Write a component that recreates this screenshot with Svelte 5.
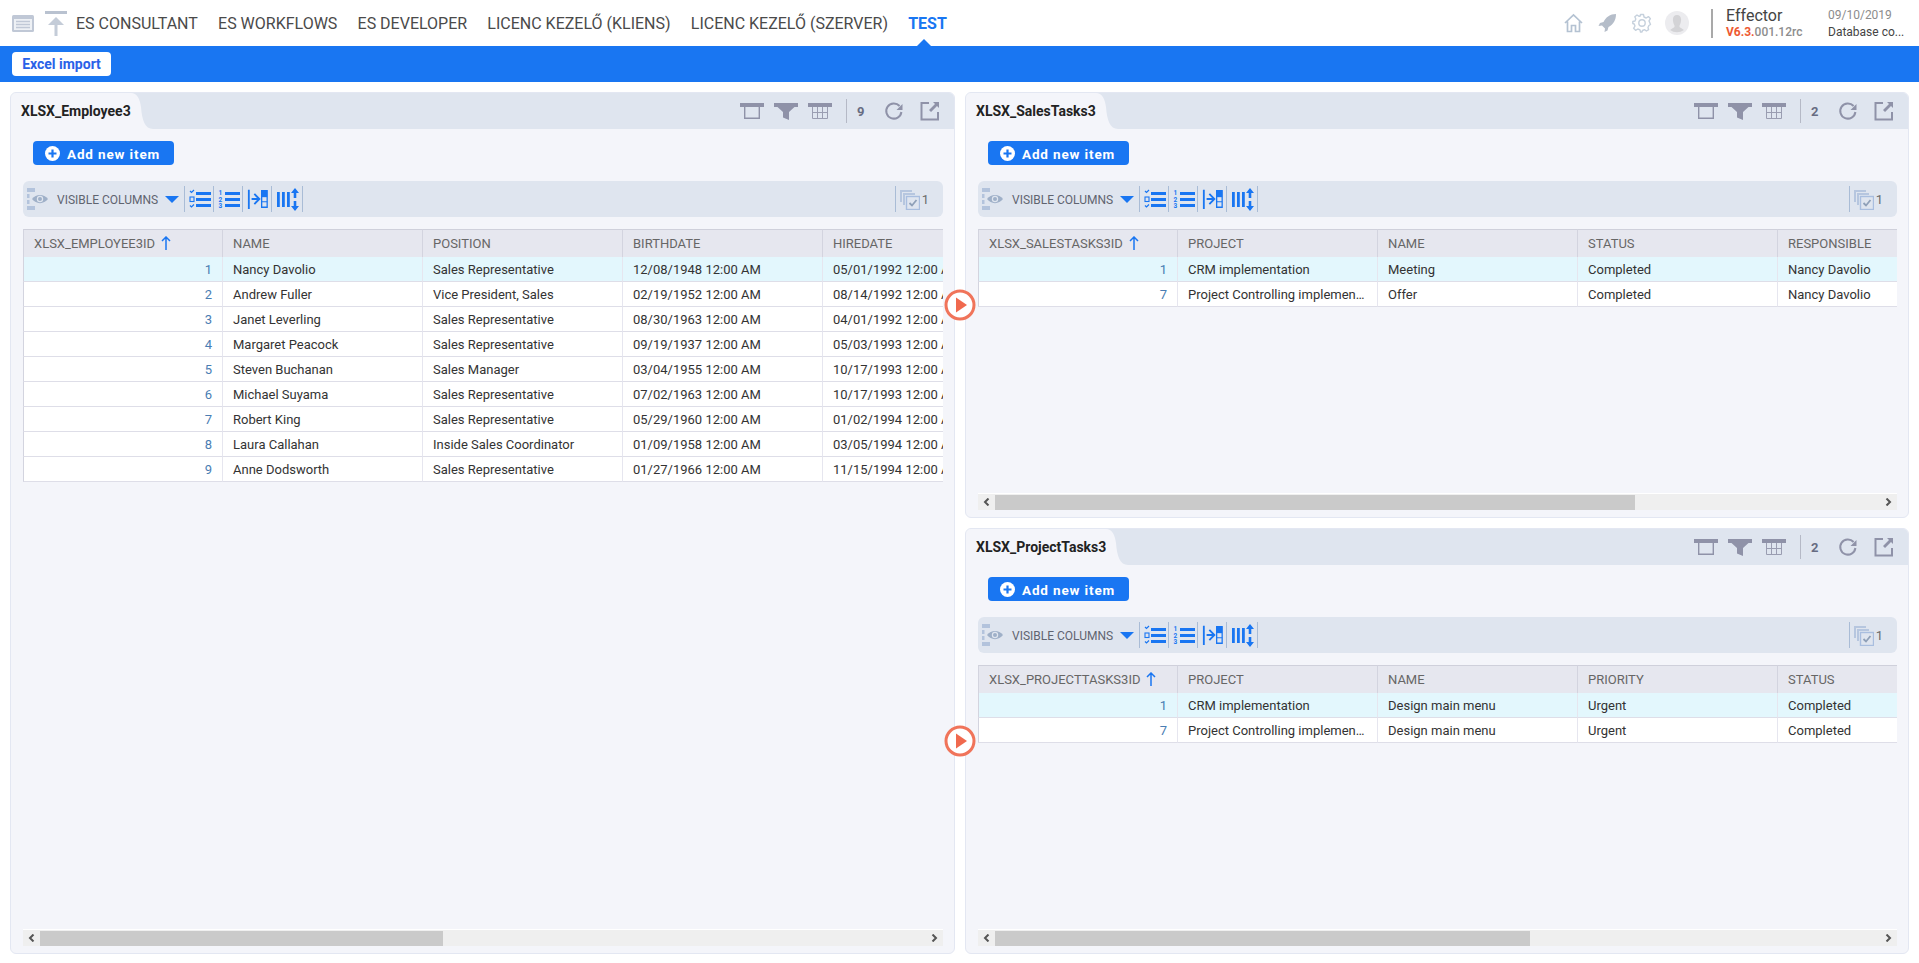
<script>
  const nav = ['ES CONSULTANT', 'ES WORKFLOWS', 'ES DEVELOPER', 'LICENC KEZELŐ (KLIENS)', 'LICENC KEZELŐ (SZERVER)'];

  const employees = {
    title: 'XLSX_Employee3',
    count: 9,
    thumb: 403,
    columns: ['XLSX_EMPLOYEE3ID', 'NAME', 'POSITION', 'BIRTHDATE', 'HIREDATE'],
    rows: [
      ['1', 'Nancy Davolio', 'Sales Representative', '12/08/1948 12:00 AM', '05/01/1992 12:00 AM'],
      ['2', 'Andrew Fuller', 'Vice President, Sales', '02/19/1952 12:00 AM', '08/14/1992 12:00 AM'],
      ['3', 'Janet Leverling', 'Sales Representative', '08/30/1963 12:00 AM', '04/01/1992 12:00 AM'],
      ['4', 'Margaret Peacock', 'Sales Representative', '09/19/1937 12:00 AM', '05/03/1993 12:00 AM'],
      ['5', 'Steven Buchanan', 'Sales Manager', '03/04/1955 12:00 AM', '10/17/1993 12:00 AM'],
      ['6', 'Michael Suyama', 'Sales Representative', '07/02/1963 12:00 AM', '10/17/1993 12:00 AM'],
      ['7', 'Robert King', 'Sales Representative', '05/29/1960 12:00 AM', '01/02/1994 12:00 AM'],
      ['8', 'Laura Callahan', 'Inside Sales Coordinator', '01/09/1958 12:00 AM', '03/05/1994 12:00 AM'],
      ['9', 'Anne Dodsworth', 'Sales Representative', '01/27/1966 12:00 AM', '11/15/1994 12:00 AM']
    ]
  };
  const sales = {
    title: 'XLSX_SalesTasks3',
    count: 2,
    thumb: 640,
    columns: ['XLSX_SALESTASKS3ID', 'PROJECT', 'NAME', 'STATUS', 'RESPONSIBLE'],
    rows: [
      ['1', 'CRM implementation', 'Meeting', 'Completed', 'Nancy Davolio'],
      ['7', 'Project Controlling implementation', 'Offer', 'Completed', 'Nancy Davolio']
    ]
  };
  const project = {
    title: 'XLSX_ProjectTasks3',
    count: 2,
    thumb: 535,
    columns: ['XLSX_PROJECTTASKS3ID', 'PROJECT', 'NAME', 'PRIORITY', 'STATUS'],
    rows: [
      ['1', 'CRM implementation', 'Design main menu', 'Urgent', 'Completed'],
      ['7', 'Project Controlling implementation', 'Design main menu', 'Urgent', 'Completed']
    ]
  };
</script>

{#snippet panel(d, cls)}
  <section class="panel {cls}">
    <header class="phead">
      <div class="tab">{d.title}</div>
      <svg class="curve" width="22" height="36" viewBox="0 0 22 36"><path d="M0 0C6 0 9 6 10 14C11 27 14 36 22 36H0Z" /></svg>
      <div class="ptools">
        <svg width="24" height="16" viewBox="0 0 24 16"><path d="M0 0H24V4H0Z" class="g" /><path d="M4.700 4V15.300H19.300V4" fill="none" stroke="#8f92a8" stroke-width="1.400" /></svg>
        <svg width="24" height="17" viewBox="0 0 24 17"><path d="M0 0H24V4H20.500L15 9V17L9 14.500V9L3.500 4H0Z" class="g" /></svg>
        <svg width="24" height="16" viewBox="0 0 24 16"><path d="M0 0H24V4H0Z" class="g" /><path d="M4.500 4V15.500H19.500V4M4.500 9.500H19.500M9.500 4V15.500M14.500 4V15.500" fill="none" stroke="#9a9db1" stroke-width="1" /></svg>
        <span class="psep"></span>
        <span class="pcount">{d.count}</span>
        <svg class="refresh" width="20" height="20" viewBox="0 0 20 20"><path d="M15.600 5A7.600 7.600 0 1 0 17.400 11" fill="none" stroke="#8f92a8" stroke-width="2" /><path d="M18.500 3V9H12.500Z" class="g" /></svg>
        <svg class="ext" width="20" height="20" viewBox="0 0 20 20"><path d="M9 2H1.500V18.500H18V11" fill="none" stroke="#8f92a8" stroke-width="2" /><path d="M13 1H19V7L17 5L11 11L9 9L15 3Z" class="g" /></svg>
      </div>
    </header>

    <div class="pbody">
      <button class="add">
        <svg width="15" height="15" viewBox="0 0 15 15"><circle cx="7.500" cy="7.500" r="7.500" fill="#fff" /><path d="M7.500 3.500V11.500M3.500 7.500H11.500" stroke="#1976f2" stroke-width="2.200" /></svg>
        <span>Add new item</span>
      </button>

      <div class="tbar">
        <svg class="eye" width="21" height="22" viewBox="0 0 21 22">
          <path d="M0 0H8V4H0ZM0 6H2.500V10H0ZM0 12H2.500V16H0ZM0 18H8V22H0Z" fill="#b3c3dc" />
          <path d="M5 11C9 5.500 17 5.500 21 11C17 16.500 9 16.500 5 11Z" fill="#9fb0c8" />
          <circle cx="13" cy="11" r="3.200" fill="#dfe5ef" /><circle cx="13" cy="11" r="2" fill="#9fb0c8" />
        </svg>
        <span class="vis">VISIBLE COLUMNS</span>
        <span class="caret"></span>
        <span class="tsep"></span>
        <svg class="tic" width="22" height="20" viewBox="0 0 22 20">
          <path d="M7 3H22V6H7ZM7 9H22V12H7ZM7 15H22V18H7Z" fill="#1976f2" />
          <path d="M1 2L2.500 3.500L5 1M1 16.500L2.500 18L5 15.500" fill="none" stroke="#1976f2" stroke-width="1.200" />
          <rect x="1" y="8" width="4" height="4.500" fill="none" stroke="#1976f2" stroke-width="1.100" />
        </svg>
        <span class="tsep"></span>
        <svg class="tic" width="22" height="20" viewBox="0 0 22 20">
          <path d="M7 3H22V6H7ZM7 9H22V12H7ZM7 15H22V18H7Z" fill="#1976f2" />
          <text x="0.500" y="6" class="num">1</text><text x="0.500" y="12.500" class="num">2</text><text x="0.500" y="19" class="num">3</text>
        </svg>
        <span class="tsep"></span>
        <svg class="tic" width="22" height="22" viewBox="0 0 22 24">
          <path d="M0 2H2V23H0Z" fill="#1976f2" />
          <path d="M4 12H11.500M7 6.500L12.500 12L7 17.500" fill="none" stroke="#1976f2" stroke-width="2" />
          <path d="M15 3H21V21H15Z" fill="none" stroke="#1976f2" stroke-width="1.400" /><rect x="15" y="3" width="6" height="7" fill="#1976f2" />
          <path d="M15 15H21" stroke="#1976f2" stroke-width="1.200" />
        </svg>
        <span class="tsep"></span>
        <svg class="tic" width="24" height="24" viewBox="0 0 24 24">
          <path d="M1 5H3.800V20H1ZM6 5H8.800V20H6ZM11 5H13.800V20H11Z" fill="#1976f2" />
          <path d="M19 1L23 6H20.300V11H17.700V6H15ZM17.700 14H20.300V19H23L19 24L15 19H17.700Z" fill="#1976f2" />
        </svg>
        <span class="tsep"></span>
        <span class="spacer"></span>
        <span class="tsep wide"></span>
        <svg class="stack" width="21" height="21" viewBox="0 0 21 21">
          <path d="M1 1H13V3H3V13H1Z" fill="#b6c6df" /><path d="M4 4H16V6H6V16H4Z" fill="#b6c6df" />
          <rect x="7.500" y="7.500" width="13" height="13" fill="#dfe5ef" stroke="#a9bedf" stroke-width="1.400" />
          <path d="M10.500 14L13 16.500L17.500 11" fill="none" stroke="#8fa0b8" stroke-width="1.800" />
        </svg>
        <span class="tcount">1</span>
      </div>

      <div class="grid">
        <table>
          <thead>
            <tr>
              {#each d.columns as c, i}
                <th>{c}{#if i === 0}<svg class="sort" width="10" height="14" viewBox="0 0 10 14"><path d="M5 1V14M1 5L5 1L9 5" fill="none" stroke="#1976f2" stroke-width="1.500" /></svg>{/if}</th>
              {/each}
            </tr>
          </thead>
          <tbody>
            {#each d.rows as r, ri}
              <tr class:sel={ri === 0}>
                {#each r as v, i}
                  <td class:id={i === 0}>{v}</td>
                {/each}
              </tr>
            {/each}
          </tbody>
        </table>
      </div>

      <div class="hscroll">
        <span class="arr"><svg width="7" height="8" viewBox="0 0 7 8"><path d="M5.500 0.500L2 4L5.500 7.500" fill="none" stroke="#555" stroke-width="2" /></svg></span>
        <div class="track"><div class="thumb" style="width:{d.thumb}px"></div></div>
        <span class="arr"><svg width="7" height="8" viewBox="0 0 7 8"><path d="M1.500 0.500L5 4L1.500 7.500" fill="none" stroke="#555" stroke-width="2" /></svg></span>
      </div>
    </div>
  </section>
{/snippet}

{#snippet play(cls)}
  <svg class="play {cls}" width="32" height="32" viewBox="0 0 32 32">
    <circle cx="16" cy="16" r="14" fill="#fff" stroke="#f0745a" stroke-width="3" />
    <path d="M12 8.500L23 16L12 23.500Z" fill="#f0694e" />
  </svg>
{/snippet}

<div class="page">
  <nav class="top">
    <svg class="ic-list" width="22" height="17" viewBox="0 0 22 17">
      <rect width="22" height="17" rx="1.500" fill="#c0c8d6" />
      <rect x="2" y="4" width="18" height="11" fill="#eef1f5" />
      <path d="M4 6.500H18M4 9.500H18M4 12.500H18" stroke="#c0c8d6" stroke-width="1.500" />
    </svg>
    <svg class="ic-up" width="22" height="25" viewBox="0 0 22 25">
      <path d="M0 0H22V3H0Z" fill="#b9c2d0" /><path d="M9.500 25V14H3L11 6L19 14H12.500V25Z" fill="#c4ccd8" />
    </svg>
    <ul class="menu">
      {#each nav as n}<li>{n}</li>{/each}
      <li class="active">TEST</li>
    </ul>
    <div class="right">
      <svg class="r1" width="19" height="20" viewBox="0 0 19 20"><path d="M1 10L9.500 2L18 10M3.500 8.500V18.500H7.500V12.500H11.500V18.500H15.500V8.500" fill="none" stroke="#b4c2d2" stroke-width="1.700" /></svg>
      <svg class="r2" width="19" height="20" viewBox="0 0 19 20"><path d="M18 1C12 1 8 4 5.500 9L2 10L0.500 13L4 12.500L7 15.500L6.500 19L9.500 17.500L10.500 14C15.500 11.500 18 7 18 1Z" fill="#b5bdc9" /></svg>
      <svg class="r3" width="20" height="20" viewBox="0 0 20 20"><path d="M8.500 1.500H11.500L12 4L14.200 5L16.400 3.600L18.400 5.700L17 7.900L17.900 10L18.500 11.500L16.900 12.500L16 14.500L16.600 16.600L14.400 18L12.500 16.600L10.500 17.500L10 19H8.500L8 16.800L5.800 16L3.600 17.300L1.600 15.300L3 13L2.200 11L0.800 10.500V8.500L3 8L3.800 6L2.800 3.800L5 2L7.200 3.400L8.200 3Z" fill="none" stroke="#c6d1dd" stroke-width="1.400" stroke-linejoin="round" /><circle cx="10" cy="10" r="3.200" fill="none" stroke="#c6d1dd" stroke-width="1.400" /></svg>
      <svg class="r4" width="24" height="24" viewBox="0 0 24 24"><circle cx="12" cy="12" r="12" fill="#ececef" /><path d="M12 4C15 4 16.500 6.500 16 10C15.700 12 15 13.500 14.500 14.500V16L19 19A12 12 0 0 1 5 19L9.500 16V14.500C9 13.500 8.300 12 8 10C7.500 6.500 9 4 12 4Z" fill="#d3d3d6" /></svg>
      <span class="vsep"></span>
      <div class="brand">
        <div class="bname">Effector</div>
        <div class="bver"><b>V6.3.</b>001.12rc</div>
      </div>
      <div class="meta">
        <div class="date">09/10/2019</div>
        <div class="db">Database co...</div>
      </div>
    </div>
  </nav>

  <div class="blue">
    <span class="notch"></span>
    <button class="excel">Excel import</button>
  </div>

  <main class="work">
    {@render panel(employees, 'left')}
    {@render panel(sales, '')}
    {@render panel(project, '')}
    {@render play('p1')}
    {@render play('p2')}
  </main>
</div>

<style>
  :global(body) { margin: 0; background: #fff; font-family: Roboto, "Liberation Sans", sans-serif; overflow: hidden; }
  .page { height: 963px; display: flex; flex-direction: column; color: #333; }

  .top { height: 46px; display: flex; align-items: center; flex: none; }
  .ic-list { margin-left: 12px; }
  .ic-up { margin-left: 11px; margin-top: 1px; }
  .menu { list-style: none; display: flex; gap: 20.200px; margin: 0 0 0 9px; padding: 0; font-size: 16px; color: #4a4a4a; }
  .menu li { white-space: nowrap; }
  .menu .active { color: #1976f2; font-weight: 700; }
  .right { margin-left: auto; display: flex; align-items: center; }
  .r1 { margin-right: 15px; }
  .r2 { margin-right: 15px; }
  .r3 { margin-right: 13px; }
  .r4 { margin-right: 22px; }
  .vsep { width: 2px; height: 29px; background: #a9a9a9; margin-right: 13px; }
  .brand { width: 102px; }
  .bname { font-size: 16px; line-height: 19px; color: #444; }
  .bver { font-size: 12px; line-height: 15px; color: #8d8d8d; font-weight: 500; }
  .bver b { color: #ee5a32; font-weight: 700; }
  .meta { width: 91px; }
  .date { font-size: 12px; line-height: 18px; color: #8c8c8c; }
  .db { font-size: 12px; line-height: 16px; color: #444; }

  .blue { height: 36px; flex: none; background: #1976f2; display: flex; align-items: center; position: relative; }
  .notch { position: absolute; left: 917px; top: -7px; width: 0; height: 0; border: 7px solid transparent; border-top: 0; border-bottom-color: #1976f2; }
  .excel { margin-left: 12px; height: 24px; width: 99px; padding: 0; border: 0; border-radius: 4px; background: #fff; color: #2a62e8; font: 700 14px Roboto, sans-serif; }

  .work { flex: 1; min-height: 0; position: relative; display: grid; grid-template-columns: 945px 944px; grid-template-rows: 426px 426px; gap: 10px 10px; padding: 10px 10px 9px; box-sizing: border-box; }
  .panel { background: #f4f5fa; border: 1px solid #e3e7f2; border-radius: 6px; display: flex; flex-direction: column; min-width: 0; min-height: 0; overflow: hidden; }
  .left { grid-row: 1 / span 2; }

  .phead { flex: none; height: 36px; background: #dfe5ef; display: flex; align-items: stretch; }
  .tab { background: #f4f5fa; padding: 0 0 0 10px; font-size: 14px; font-weight: 700; line-height: 36px; color: #222; white-space: nowrap; }
  .curve { flex: none; }
  .curve path { fill: #f4f5fa; }
  .ptools { margin-left: auto; display: flex; align-items: center; padding-right: 14px; }
  .ptools svg { margin-left: 10px; }
  .ptools svg:first-child { margin-left: 0; }
  .g { fill: #8f92a8; }
  .psep { width: 1px; height: 24px; background: #b5b9c6; margin: 0 10px 0 14px; }
  .pcount { width: 9px; font-size: 13px; font-weight: 700; color: #676c82; }
  .ptools .refresh { margin-left: 18px; }
  .ptools .ext { margin-left: 16px; }

  .pbody { flex: 1; min-height: 0; display: flex; flex-direction: column; padding: 0 11px 7px 12px; }
  .add { flex: none; align-self: flex-start; margin: 12px 0 16px 10px; height: 24px; width: 141px; padding: 0 0 0 12px; border: 0; border-radius: 4px; background: #1976f2; color: #fff; font: 700 13.500px Roboto, sans-serif; letter-spacing: .85px; display: flex; align-items: center; gap: 7px; }
  .add span { padding-top: 1px; }

  .tbar { flex: none; height: 36px; background: #dfe5ef; border-radius: 6px; display: flex; align-items: center; padding: 0 3px 0 4px; font-size: 12px; color: #5f6470; }
  .eye { flex: none; }
  .vis { margin-left: 9px; padding-top: 1px; width: 101px; white-space: nowrap; }
  .caret { margin-left: 7px; width: 0; height: 0; border: 7px solid transparent; border-bottom: 0; border-top: 7px solid #1976f2; }
  .tsep { width: 1px; height: 26px; background: #a9bcd6; margin-left: 5px; }
  .tic { margin: 0 0 0 4px; flex: none; }
  .tic + .tsep { margin-left: 2px; }
  .num { font: 700 6.500px Roboto, sans-serif; fill: #1976f2; }
  .spacer { flex: 1; }
  .tsep.wide { margin: 0 3px 0 0; }
  .stack { flex: none; }
  .tcount { margin: 0 11px 0 2px; font-size: 13px; color: #6b6b6b; }

  .grid { flex: 1; min-height: 0; margin-top: 12px; overflow: hidden; }
  table { border-collapse: separate; border-spacing: 0; table-layout: fixed; width: 1000px; font-size: 13px; }
  th { width: 200px; box-sizing: border-box; height: 28px; padding: 0 10px; background: #e6e7ef; border-top: 1px solid #cfd0db; border-right: 1px solid #d3d4df; font-weight: 400; color: #666; text-align: left; white-space: nowrap; }
  th:first-child, td:first-child { border-left: 1px solid #d3d4df; }
  .sort { margin-left: 6px; vertical-align: -2px; }
  td { height: 25px; box-sizing: border-box; padding: 0 10px; background: #fff; border-right: 1px solid #e6e6ef; border-bottom: 1px solid #dedee8; color: #333; white-space: nowrap; overflow: hidden; text-overflow: ellipsis; }
  .sel td { background: #e3f7fd; }
  td.id { text-align: right; color: #4a7db3; }

  .hscroll { flex: none; height: 16px; margin-top: 4px; background: #efefef; display: flex; align-items: center; border-top: 1px solid #fff; }
  .arr { flex: none; width: 17px; height: 15px; display: flex; align-items: center; justify-content: center; }
  .track { flex: 1; height: 15px; }
  .thumb { height: 15px; background: #cacaca; }

  .play { position: absolute; left: 944px; }
  .p1 { top: 207px; }
  .p2 { top: 643px; }
</style>
